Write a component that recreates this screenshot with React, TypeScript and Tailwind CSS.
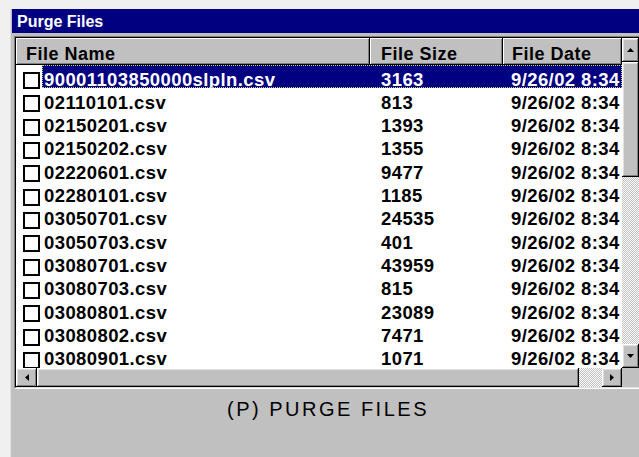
import React from "react";

type Entry = { name: string; size: string; date: string };

const files: Entry[] = [
  { name: "90001103850000slpln.csv", size: "3163", date: "9/26/02 8:34" },
  { name: "02110101.csv", size: "813", date: "9/26/02 8:34" },
  { name: "02150201.csv", size: "1393", date: "9/26/02 8:34" },
  { name: "02150202.csv", size: "1355", date: "9/26/02 8:34" },
  { name: "02220601.csv", size: "9477", date: "9/26/02 8:34" },
  { name: "02280101.csv", size: "1185", date: "9/26/02 8:34" },
  { name: "03050701.csv", size: "24535", date: "9/26/02 8:34" },
  { name: "03050703.csv", size: "401", date: "9/26/02 8:34" },
  { name: "03080701.csv", size: "43959", date: "9/26/02 8:34" },
  { name: "03080703.csv", size: "815", date: "9/26/02 8:34" },
  { name: "03080801.csv", size: "23089", date: "9/26/02 8:34" },
  { name: "03080802.csv", size: "7471", date: "9/26/02 8:34" },
  { name: "03080901.csv", size: "1071", date: "9/26/02 8:34" },
];

const raised =
  "bg-[#c0c0c0] shadow-[inset_-1px_-1px_#000,inset_1px_1px_#fff,inset_-2px_-2px_#808080,inset_2px_2px_#dfdfdf]";

const track =
  "bg-[repeating-conic-gradient(#ffffff_0%_25%,#c0c0c0_0%_50%)] bg-[length:2px_2px]";

function Arrow({ dir }: { dir: "up" | "down" | "left" | "right" }) {
  const pts =
    dir === "up"
      ? "0,4 7,4 3.5,0"
      : dir === "down"
      ? "0,0 7,0 3.5,4"
      : dir === "left"
      ? "4,0 4,7 0,3.5"
      : "0,0 0,7 4,3.5";
  const w = dir === "up" || dir === "down" ? 7 : 4;
  const h = dir === "up" || dir === "down" ? 4 : 7;
  return (
    <svg width={w} height={h} viewBox={`0 0 ${w} ${h}`}>
      <polygon points={pts} fill="#000" />
    </svg>
  );
}

function HeaderCell({ label, className }: { label: string; className: string }) {
  return (
    <div
      className={`${className} h-full shadow-[inset_-1px_-1px_#000,inset_1px_1px_#fff,inset_-2px_-2px_#808080] bg-[#c0c0c0] pt-[6.5px] text-[18px] leading-none font-bold tracking-[0.5px] text-black whitespace-nowrap overflow-hidden`}
    >
      {label}
    </div>
  );
}

function Row({ entry, selected }: { entry: Entry; selected: boolean }) {
  return (
    <div className="flex h-[23.33px] shrink-0">
      <div className="w-[26px] shrink-0 pl-[7px] pt-[7px]">
        <div className="w-[17px] h-[17px] border-2 border-black bg-white" />
      </div>
      <div
        className={`flex flex-1 min-w-0 h-full pt-[5.5px] text-[18.5px] leading-none font-bold tracking-[0.4px] whitespace-nowrap ${
          selected
            ? "bg-[#000080] text-white outline-1 outline-dotted outline-[#c8c878] -outline-offset-1"
            : "text-black"
        }`}
      >
        <div className="w-[328px] shrink-0 pl-[2px]">{entry.name}</div>
        <div className="w-[133px] shrink-0 pl-[11px]">{entry.size}</div>
        <div className="flex-1 pl-[8px]">{entry.date}</div>
      </div>
    </div>
  );
}

export default function App() {
  return (
    <div className="w-[639px] h-[457px] overflow-hidden bg-[#f0f0f0] pt-[9px] pl-[10px] font-['Liberation_Sans',Arial,sans-serif]">
      <div className="w-[634px] h-[448px] bg-[#c0c0c0] border-l border-[#dfdfdf] pl-[1px] flex flex-col">
        {/* caption */}
        <div className="h-[24px] shrink-0 bg-[#000080] pl-[5px] pt-[1px] text-white text-[16px] font-bold leading-[24px]">
          Purge Files
        </div>

        {/* list view */}
        <div className="pl-[2px] pt-[3px]">
          <div className="w-[627px] border border-t-[#808080] border-l-[#808080] border-b-white border-r-white">
            <div className="border border-t-black border-l-black border-b-[#dfdfdf] border-r-[#dfdfdf] grid grid-cols-[606px_17px] grid-rows-[330px_19px]">
              {/* columns */}
              <div className="bg-white overflow-hidden flex flex-col">
                <div className="flex h-[27px] shrink-0">
                  <HeaderCell label="File Name" className="w-[354px] shrink-0 pl-[10px]" />
                  <HeaderCell label="File Size" className="w-[133px] shrink-0 pl-[11px]" />
                  <HeaderCell label="File Date" className="flex-1 pl-[9px]" />
                </div>
                {files.map((f, i) => (
                  <Row key={f.name} entry={f} selected={i === 0} />
                ))}
              </div>

              {/* vertical scrollbar */}
              <div className="flex flex-col h-full">
                <div className={`${raised} h-[24px] shrink-0 flex items-center justify-center`}>
                  <Arrow dir="up" />
                </div>
                <div className={`${raised} h-[115px] shrink-0`} />
                <div className={`${track} flex-1`} />
                <div className={`${raised} h-[24px] shrink-0 flex items-center justify-center`}>
                  <Arrow dir="down" />
                </div>
              </div>

              {/* horizontal scrollbar */}
              <div className="flex h-full">
                <div className={`${raised} w-[21px] shrink-0 flex items-center justify-center`}>
                  <Arrow dir="left" />
                </div>
                <div className={`${raised} w-[542px] shrink-0`} />
                <div className={`${track} flex-1`} />
                <div className={`${raised} w-[20px] shrink-0 flex items-center justify-center`}>
                  <Arrow dir="right" />
                </div>
              </div>
              <div className="bg-[#c0c0c0]" />
            </div>
          </div>
        </div>

        {/* action */}
        <div className="pt-[9.5px] text-center text-[20px] leading-none tracking-[2.5px] text-black">
          (P) PURGE FILES
        </div>
      </div>
    </div>
  );
}
